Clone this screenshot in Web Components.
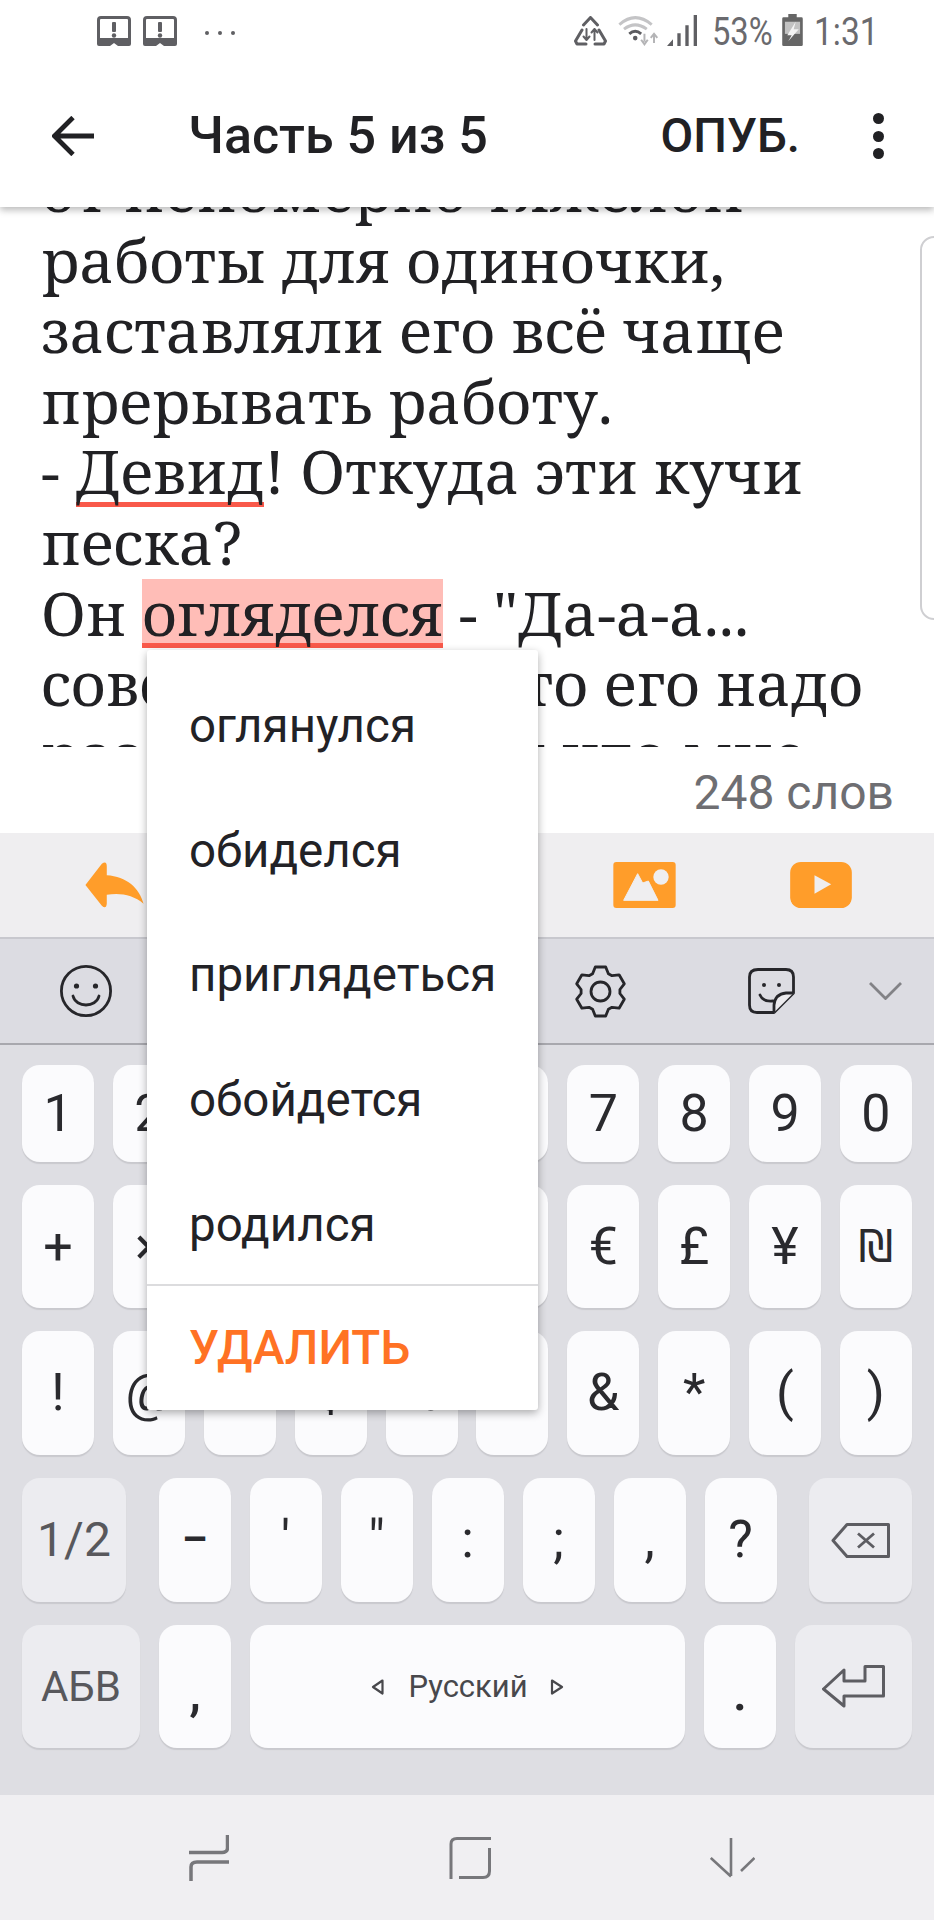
<!DOCTYPE html>
<html lang="ru">
<head>
<meta charset="utf-8">
<title>Часть 5 из 5</title>
<style>
  html, body { margin: 0; padding: 0; }
  body {
    width: 934px;
    height: 1920px;
    overflow: hidden;
    position: relative;
    display: flex;
    flex-direction: column;
    background: #fff;
    font-family: Roboto, "Noto Sans", sans-serif;
  }
</style>
</head>
<body>
  <status-bar></status-bar>
  <app-bar title="Часть 5 из 5" action="ОПУБ."></app-bar>
  <text-editor>
    от непомерно тяжелой<br>
    работы для одиночки,<br>
    заставляли его всё чаще<br>
    прерывать работу.<br>
    - <spell-word kind="flag">Девид</spell-word>! Откуда эти кучи<br>
    песка?<br>
    Он <spell-word kind="active">огляделся</spell-word> - "Да-а-а...<br>
    совсем забыл, что его надо<br>
    разобраться, вот что мне
  </text-editor>
  <word-count>248 слов</word-count>
  <format-toolbar></format-toolbar>
  <kb-strip></kb-strip>
  <kb-board></kb-board>
  <nav-buttons></nav-buttons>
  <spell-menu>
    <menu-item>оглянулся</menu-item>
    <menu-item>обиделся</menu-item>
    <menu-item>приглядеться</menu-item>
    <menu-item>обойдется</menu-item>
    <menu-item>родился</menu-item>
    <menu-item slot="danger">УДАЛИТЬ</menu-item>
  </spell-menu>

<script>
class StatusBar extends HTMLElement {
  constructor() {
    super();
    this.attachShadow({ mode: 'open' });
  }
  connectedCallback() {
    const alert = `
      <svg width="34" height="30" viewBox="0 0 34 30">
        <rect x="1.5" y="1.5" width="31" height="23" rx="2.5" fill="none" stroke="#5f5f63" stroke-width="3"/>
        <path d="M0 22h34v6a2 2 0 0 1-2 2H21l-4-3-4 3H2a2 2 0 0 1-2-2z" fill="#5f5f63"/>
        <rect x="15" y="6" width="4" height="10" rx="1" fill="#5f5f63"/>
        <circle cx="17" cy="19.5" r="2.2" fill="#5f5f63"/>
      </svg>`;
    this.shadowRoot.innerHTML = `
      <style>
        :host {
          display: flex;
          flex: none;
          position: relative;
          z-index: 3;
          height: 70px;
          box-sizing: border-box;
          padding: 14px 56px 0 97px;
          align-items: flex-start;
          background: #fff;
          color: #6a6a6e;
        }
        .left { display: flex; align-items: flex-start; margin-top: 2px; }
        .left svg + svg { margin-left: 12px; }
        .dots { display: flex; gap: 9px; margin: 15px 0 0 28px; }
        .dots i { width: 4px; height: 4px; border-radius: 50%; background: #5f5f63; }
        .right { display: flex; align-items: flex-start; margin-left: auto; }
        .num {
          display: inline-block;
          font: 400 38px/38px Roboto, sans-serif;
          white-space: nowrap;
          transform-origin: left center;
          margin-top: -1px;
        }
        .pct { width: 59px; margin-left: 15px; transform: scaleX(.86); }
        .batt { margin-left: 11px; }
        .time { width: 64px; margin-left: 11px; transform: scaleX(.88); }
      </style>
      <div class="left">${alert}${alert}<div class="dots"><i></i><i></i><i></i></div></div>
      <div class="right">
        <svg width="33" height="30" viewBox="0 0 33 30" style="margin-top:2px" fill="none" stroke="#5f5f63" stroke-width="3" stroke-linejoin="round" stroke-linecap="round">
          <path d="M9.5 9 16.5 1.5 23.5 9"/>
          <path d="M8 14 1.5 25l1.5 3h9"/>
          <path d="M25 14l6.500 11-1.500 3h-9"/>
          <path d="M12.500 13v11M9.500 20.500l3 3.500 3-3.500M20.500 24V13M17.500 16.500l3-3.500 3 3.500" stroke-width="2"/>
        </svg>
        <svg width="43" height="33" viewBox="238 40 130 100" style="margin-left:11px">
          <path d="M242 72Q290 30 340 72" fill="none" stroke="#c4c4c6" stroke-width="9"/>
          <path d="M256 86Q290 60 325 86" fill="none" stroke="#c4c4c6" stroke-width="9"/>
          <path d="M272 100Q290 85 308 100" fill="none" stroke="#5c5c60" stroke-width="9"/>
          <circle cx="290" cy="113" r="7" fill="#5c5c60"/>
          <path d="M318 100v24M308 118l10 14 10-14" fill="none" stroke="#b4b4b6" stroke-width="6"/>
          <path d="M347 128v-24M337 112l10-12 10 12" fill="none" stroke="#b4b4b6" stroke-width="6"/>
        </svg>
        <svg width="30" height="31" viewBox="380 45 90 93" style="margin:1px 0 0 6px" fill="#5f5f63">
          <path d="M380 138l18-20v20zM411 100h10v38h-10zM435 76h10v62h-10zM460 45h10v93h-10z"/>
        </svg>
        <span class="num pct">53%</span>
        <svg class="batt" width="21" height="32" viewBox="727 45 61 95">
          <rect x="745" y="45" width="25" height="12" fill="#666"/>
          <rect x="727" y="55" width="61" height="85" rx="4" fill="#666"/>
          <rect x="735" y="68" width="45" height="36" fill="#c2c2c2"/>
          <path d="M767 68 742 108h13l-10 18 31-36h-15z" fill="#f4f4f4"/>
        </svg>
        <span class="num time">1:31</span>
      </div>
    `;
  }
}
customElements.define('status-bar', StatusBar);

class AppBar extends HTMLElement {
  constructor() {
    super();
    this.attachShadow({ mode: 'open' });
  }
  connectedCallback() {
    this.shadowRoot.innerHTML = `
      <style>
        :host {
          display: flex;
          flex: none;
          position: relative;
          z-index: 2;
          height: 137px;
          box-sizing: border-box;
          padding: 0 50px 5px 52px;
          align-items: center;
          background: #fff;
          box-shadow: 0 3px 7px rgba(0,0,0,.28);
          color: #212124;
          font-family: Roboto, sans-serif;
          font-weight: 500;
        }
        .title { font-size: 52px; line-height: 60px; margin-left: 94px; white-space: nowrap; }
        .action { font-size: 47.500px; line-height: 60px; margin-left: auto; margin-right: 73px; }
        .more { display: flex; flex-direction: column; gap: 6.500px; }
        .more i { width: 11px; height: 11px; border-radius: 50%; background: #212124; }
      </style>
      <svg width="42" height="40" viewBox="0 0 42 40" fill="none" stroke="#212124" stroke-width="4.800">
        <path d="M42 20H3M21 1.500 2.500 20 21 38.500"/>
      </svg>
      <span class="title">${this.getAttribute('title')}</span>
      <span class="action">${this.getAttribute('action')}</span>
      <span class="more"><i></i><i></i><i></i></span>
    `;
  }
}
customElements.define('app-bar', AppBar);

class TextEditor extends HTMLElement {
  constructor() {
    super();
    this.attachShadow({ mode: 'open' });
    this.shadowRoot.innerHTML = `
      <style>
        :host {
          display: block;
          flex: none;
          height: 540px;
          position: relative;
          overflow: hidden;
          background: #fff;
          color: #212124;
          font: 400 60.500px/70.600px "Noto Serif", "DejaVu Serif Condensed", serif;
        }
        .content { margin-top: -53px; padding-left: 41px; white-space: nowrap; }
        .handle {
          position: absolute;
          left: 920px;
          top: 29px;
          width: 30px;
          height: 384px;
          box-sizing: border-box;
          border: 2px solid #cfcfd2;
          border-radius: 14px;
        }
      </style>
      <div class="content"><slot></slot></div>
      <div class="handle"></div>
    `;
  }
}
customElements.define('text-editor', TextEditor);

class SpellWord extends HTMLElement {
  constructor() {
    super();
    this.attachShadow({ mode: 'open' });
    this.shadowRoot.innerHTML = `
      <style>
        :host {
          display: inline-block;
          height: 70.600px;
          box-shadow: inset 0 -5px 0 #f9594a;
        }
        :host([kind="active"]) {
          letter-spacing: -.6px;
          background: linear-gradient(transparent 1.500px, #ffbdb7 1.500px);
        }
      </style>
      <slot></slot>
    `;
  }
}
customElements.define('spell-word', SpellWord);

class WordCount extends HTMLElement {
  constructor() {
    super();
    this.attachShadow({ mode: 'open' });
    this.shadowRoot.innerHTML = `
      <style>
        :host {
          display: flex;
          flex: none;
          height: 86px;
          box-sizing: border-box;
          padding: 6px 40px 0 0;
          justify-content: flex-end;
          align-items: center;
          background: #fff;
          color: #6e6e72;
          font: 400 48px/60px Roboto, sans-serif;
        }
      </style>
      <slot></slot>
    `;
  }
}
customElements.define('word-count', WordCount);

class FormatToolbar extends HTMLElement {
  constructor() {
    super();
    this.attachShadow({ mode: 'open' });
    this.shadowRoot.innerHTML = `
      <style>
        :host {
          display: flex;
          flex: none;
          height: 106px;
          box-sizing: border-box;
          padding: 0 82px 0 85px;
          align-items: center;
          background: #efeef0;
          border-bottom: 2px solid #c8c8ce;
        }
        .undo { margin-right: auto; }
        svg { display: block; }
        .video { margin-left: 114px; }
      </style>
      <svg class="undo" width="59" height="46" viewBox="75 65 177 140">
        <path d="M75 135 125 70Q140 60 140 78V105C200 108 240 145 252 192 220 165 180 158 140 165V192Q138 210 125 198Z" fill="#ff9d2a"/>
      </svg>
      <svg width="63" height="46" viewBox="157 65 187 138">
        <rect x="157" y="65" width="187" height="138" rx="9" fill="#ff9d2a"/>
        <path d="M188 180 230 100 245 128 262 122 291 180Z" fill="#efeef0" stroke="#efeef0" stroke-width="3" stroke-linejoin="round"/>
        <circle cx="300" cy="110" r="23" fill="#efeef0"/>
      </svg>
      <svg class="video" width="62" height="46" viewBox="687 65 185 138">
        <rect x="687" y="65" width="185" height="138" rx="32" fill="#ff9d2a"/>
        <path d="M760 105 810 132 760 160Z" fill="#efeef0"/>
      </svg>
    `;
  }
}
customElements.define('format-toolbar', FormatToolbar);

class KbStrip extends HTMLElement {
  constructor() {
    super();
    this.attachShadow({ mode: 'open' });
  }
  gearPath() {
    // six teeth, outline drawn from the centre of the 53px box
    const pt = (deg, r) => {
      const a = deg * Math.PI / 180;
      return (26.5 + r * Math.cos(a)).toFixed(1) + ' ' + (26.5 + r * Math.sin(a)).toFixed(1);
    };
    let d = '';
    for (let i = 0; i < 6; i++) {
      const c = -90 + i * 60;
      d += (i ? 'L' : 'M') + pt(c - 24, 19.5) + 'L' + pt(c - 12, 25) + 'L' + pt(c + 12, 25) + 'L' + pt(c + 24, 19.5);
    }
    return d + 'Z';
  }
  connectedCallback() {
    this.shadowRoot.innerHTML = `
      <style>
        :host {
          display: flex;
          flex: none;
          height: 106px;
          box-sizing: border-box;
          padding: 0 32px 0 60px;
          align-items: center;
          background: #dcdce2;
          border-bottom: 2px solid #a8a8ae;
        }
        svg { display: block; fill: none; stroke: #26262a; stroke-width: 2.800; }
        .gear { margin-left: auto; }
        .sticker { margin-left: 121px; }
        .chev { margin-left: 74px; stroke: #828286; }
      </style>
      <svg width="52" height="52" viewBox="0 0 52 52">
        <circle cx="26" cy="26" r="24.600"/>
        <circle cx="16.500" cy="21" r="2.600" fill="#26262a" stroke="none"/>
        <circle cx="35.500" cy="21" r="2.600" fill="#26262a" stroke="none"/>
        <path d="M13 31C16 43 36 43 39 31" stroke-linecap="round"/>
      </svg>
      <svg class="gear" width="53" height="53" viewBox="0 0 53 53">
        <path d="${this.gearPath()}" stroke-linejoin="round"/>
        <circle cx="26.500" cy="26.500" r="9.500"/>
      </svg>
      <svg class="sticker" width="47" height="46" viewBox="0 0 47 46">
        <path d="M10 1.500H38Q45.500 1.500 45.500 9V25L26 44.500H9Q1.500 44.500 1.500 37V9Q1.500 1.500 10 1.500Z" stroke-linejoin="round"/>
        <path d="M45.500 25H38Q27 26 26 37V44.500" fill="#ecebee" stroke-linejoin="round"/>
        <circle cx="16" cy="17" r="2" fill="#26262a" stroke="none"/>
        <circle cx="31" cy="17" r="2" fill="#26262a" stroke="none"/>
        <path d="M12 27Q15 34 25 33" stroke-linecap="round"/>
      </svg>
      <svg class="chev" width="33" height="18" viewBox="0 0 33 18">
        <path d="M1 1 16.500 16.500 32 1"/>
      </svg>
    `;
  }
}
customElements.define('kb-strip', KbStrip);

class KbKey extends HTMLElement {
  constructor() {
    super();
    this.attachShadow({ mode: 'open' });
    this.shadowRoot.innerHTML = `
      <style>
        :host {
          display: flex;
          flex: 0 0 auto;
          width: 72px;
          box-sizing: border-box;
          align-items: center;
          justify-content: center;
          border-radius: 18px;
          background: #fbfbfd;
          box-shadow: 0 2px 1px #c9c9ce;
          color: #2a2a2e;
          font: 400 52px/1 Roboto, "Noto Sans", "DejaVu Sans", sans-serif;
        }
        :host([fn]) { background: #ececf0; color: #58585c; }
        :host([low]) { padding-top: 12px; font-weight: 500; }
        :host([dash]) { font-size: 40px; font-weight: 700; }
      </style>
      <slot></slot>
    `;
  }
}
customElements.define('kb-key', KbKey);

class KbRow extends HTMLElement {
  constructor() {
    super();
    this.attachShadow({ mode: 'open' });
    this.shadowRoot.innerHTML = `
      <style>
        :host { display: flex; justify-content: space-between; }
      </style>
      <slot></slot>
    `;
  }
}
customElements.define('kb-row', KbRow);

class KbBoard extends HTMLElement {
  constructor() {
    super();
    this.attachShadow({ mode: 'open' });
  }
  row(chars, h) {
    const keys = chars.map(c => `<kb-key>${c}</kb-key>`).join('');
    return `<kb-row style="height:${h}px">${keys}</kb-row>`;
  }
  connectedCallback() {
    const grp = s => s.split(' ').map(c => `<kb-key>${c}</kb-key>`).join('');
    const backspace = `
      <svg width="59" height="35" viewBox="0 0 59 35" fill="none" stroke="#5d5d62" stroke-width="3" stroke-linejoin="round">
        <path d="M16 1.500H57.500V33.500H16L2 17.500Z"/>
        <path d="M27 10.500 43 24.500M43 10.500 27 24.500" stroke-width="2.800"/>
      </svg>`;
    const enter = `
      <svg width="63" height="43" viewBox="0 0 63 43" fill="none" stroke="#5d5d62" stroke-width="3" stroke-linejoin="round">
        <path d="M1.500 24 22 5V16H43V1.500H61.500V31H22V41Z"/>
      </svg>`;
    const space = `
      <svg width="13" height="16" viewBox="0 0 13 16" fill="none" stroke="#48484c" stroke-width="2.200"><path d="M11.500 1.500 2 8l9.500 6.500Z" stroke-linejoin="round"/></svg>
      <span class="lang">Русский</span>
      <svg width="14" height="16" viewBox="0 0 14 16" fill="none" stroke="#48484c" stroke-width="2.200"><path d="M2 1.500 12 8 2 14.500Z" stroke-linejoin="round"/></svg>`;
    this.shadowRoot.innerHTML = `
      <style>
        :host {
          display: flex;
          flex-direction: column;
          flex: none;
          height: 750px;
          box-sizing: border-box;
          padding: 20px 22px 0 22px;
          gap: 23px;
          background: #dedee3;
        }
        .group { display: flex; gap: 19px; }
        .group kb-key { height: 124px; }
        .lang { font-size: 31px; color: #48484c; margin: 0 22px 0 24px; }
        .spacebar { width: 435px; font-size: 31px; }
        svg { display: block; }
      </style>
      ${this.row('1 2 3 4 5 6 7 8 9 0'.split(' '), 97)}
      <kb-row style="height:123px">
        ${'+ × ÷ = / _ € £ ¥'.split(' ').map(c => `<kb-key>${c}</kb-key>`).join('')}
        <kb-key style="font-family:'DejaVu Sans',sans-serif;font-size:44px">₪</kb-key>
      </kb-row>
      ${this.row('! @ # $ % ^ &amp; * ( )'.split(' '), 124)}
      <kb-row style="height:124px">
        <kb-key fn style="width:104px;font-size:48px">1/2</kb-key>
        <div class="group"><kb-key dash>–</kb-key>${grp("' &quot; : ; , ?")}</div>
        <kb-key fn style="width:103px">${backspace}</kb-key>
      </kb-row>
      <kb-row style="height:123px">
        <kb-key fn style="width:118px;font-size:42px">АБВ</kb-key>
        <kb-key low>,</kb-key>
        <kb-key class="spacebar">${space}</kb-key>
        <kb-key low>.</kb-key>
        <kb-key fn style="width:117px">${enter}</kb-key>
      </kb-row>
    `;
  }
}
customElements.define('kb-board', KbBoard);

class NavButtons extends HTMLElement {
  constructor() {
    super();
    this.attachShadow({ mode: 'open' });
    this.shadowRoot.innerHTML = `
      <style>
        :host {
          display: flex;
          flex: none;
          height: 125px;
          box-sizing: border-box;
          padding: 0 179px 0 189px;
          justify-content: space-between;
          align-items: center;
          background: #f0eff2;
        }
        svg { display: block; fill: none; stroke: #77777b; }
      </style>
      <svg width="40" height="46" viewBox="0 0 40 46" stroke-width="3.500">
        <path d="M38.500 0V13Q38.500 17.500 33 17.500H0"/>
        <path d="M40 27H8Q2 27 2 32V46"/>
      </svg>
      <svg width="42" height="42" viewBox="0 0 42 42" stroke-width="3">
        <path d="M42 1.500H8Q2 1.500 2 7V42"/>
        <path d="M10 40.500H34Q40.500 40.500 40.500 34V11"/>
      </svg>
      <svg width="45" height="40" viewBox="0 0 45 40" stroke-width="2.600">
        <path d="M21 0V38M.8 20 21 38.500M44.500 20 31 33"/>
      </svg>
    `;
  }
}
customElements.define('nav-buttons', NavButtons);

class SpellMenu extends HTMLElement {
  constructor() {
    super();
    this.attachShadow({ mode: 'open' });
    this.shadowRoot.innerHTML = `
      <style>
        :host {
          display: flex;
          flex-direction: column;
          position: absolute;
          left: 147px;
          top: 650px;
          width: 391px;
          height: 760px;
          box-sizing: border-box;
          padding-top: 14px;
          z-index: 5;
          background: #fff;
          border-radius: 3px;
          box-shadow: 0 3px 8px rgba(0,0,0,.32);
        }
        .danger {
          border-top: 2px solid #dcdcde;
          margin-top: -3px;
        }
      </style>
      <slot></slot>
      <div class="danger"><slot name="danger"></slot></div>
    `;
  }
}
customElements.define('spell-menu', SpellMenu);

class MenuItem extends HTMLElement {
  constructor() {
    super();
    this.attachShadow({ mode: 'open' });
    this.shadowRoot.innerHTML = `
      <style>
        :host {
          display: flex;
          flex: none;
          height: 124.600px;
          box-sizing: border-box;
          padding-left: 42px;
          align-items: center;
          font: inherit;
          font-size: 47.500px;
          color: #222226;
          white-space: nowrap;
        }
        :host([slot="danger"]) { height: 124px; color: #ff7224; font-weight: 500; }
      </style>
      <slot></slot>
    `;
  }
}
customElements.define('menu-item', MenuItem);
</script>
</body>
</html>
